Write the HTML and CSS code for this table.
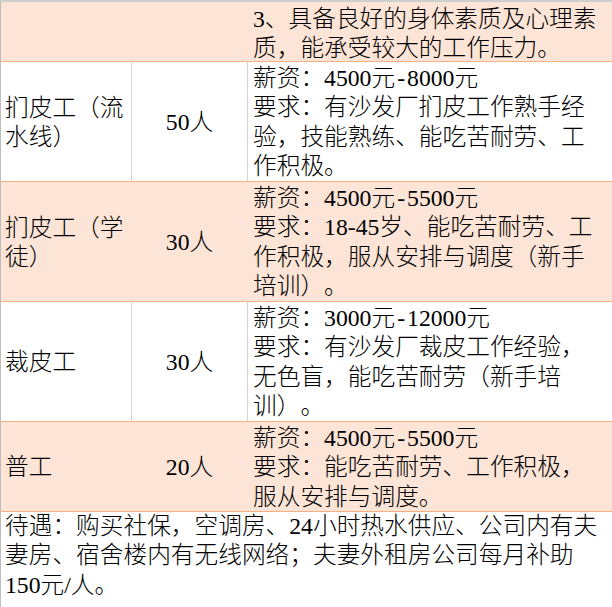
FILE: index.html
```html
<!DOCTYPE html>
<html lang="zh-CN">
<head>
<meta charset="utf-8">
<title>招聘岗位</title>
<link rel="stylesheet" href="styles.css">
</head>
<body>
<div class="sheet">
  <div class="row peach h60">
    <div class="cell c1"></div>
    <div class="cell c2"></div>
    <div class="cell c3 first"><p class="txt">3、具备良好的身体素质及心理素质，能承受较大的工作压力。</p></div>
  </div>
  <div class="row h120">
    <div class="cell c1"><p class="name">扪皮工（流水线）</p></div>
    <div class="cell c2"><p class="num">50人</p></div>
    <div class="cell c3"><p class="txt">薪资：4500元<span class="dash">-</span>8000元<br>要求：有沙发厂扪皮工作熟手经验，技能熟练、能吃苦耐劳、工作积极。</p></div>
  </div>
  <div class="row peach h120">
    <div class="cell c1"><p class="name">扪皮工（学徒）</p></div>
    <div class="cell c2"><p class="num">30人</p></div>
    <div class="cell c3"><p class="txt">薪资：4500元<span class="dash">-</span>5500元<br>要求：18-45岁、能吃苦耐劳、工作积极，服从安排与调度（新手培训）。</p></div>
  </div>
  <div class="row h120">
    <div class="cell c1"><p class="name">裁皮工</p></div>
    <div class="cell c2"><p class="num">30人</p></div>
    <div class="cell c3"><p class="txt">薪资：3000元<span class="dash">-</span>12000元<br>要求：有沙发厂裁皮工作经验，无色盲，能吃苦耐劳（新手培训）。</p></div>
  </div>
  <div class="row peach h90">
    <div class="cell c1"><p class="name">普工</p></div>
    <div class="cell c2"><p class="num">20人</p></div>
    <div class="cell c3"><p class="txt">薪资：4500元<span class="dash">-</span>5500元<br>要求：能吃苦耐劳、工作积极，服从安排与调度。</p></div>
  </div>
  <div class="footer">
    <p class="benefits">待遇：购买社保，空调房、24小时热水供应、公司内有夫妻房、宿舍楼内有无线网络；夫妻外租房公司每月补助150元/人。</p>
  </div>
</div>
</body>
</html>
```

FILE: styles.css
```css
* {
  box-sizing: border-box;
}

html, body {
  margin: 0;
  padding: 0;
  background: #ffffff;
}

body {
  width: 612px;
  height: 607px;
  overflow: hidden;
  font-family: "Liberation Serif", "Noto Sans CJK SC", serif;
  font-size: 23.7px;
  font-weight: 300;
  line-height: 29.3px;
  color: #000000;
  text-spacing-trim: space-all;
}

p {
  margin: 0;
}

.sheet {
  border-top: 2px solid #cfcfcf;
  border-left: 1px solid #bdbdbd;
  height: 607px;
}

.row {
  display: grid;
  grid-template-columns: 131px 116px 1fr;
  border-bottom: 1px solid #f4b084;
  overflow: hidden;
}

.h60 { height: 60px; }
.h120 { height: 120px; }
.h90 { height: 90px; }

.peach {
  background: #fce4d6;
}

.cell {
  border-right: 1px solid #d4d4d4;
  overflow: hidden;
}

.cell.c3 {
  border-right: none;
  padding: 2px 0 0 5px;
}

.cell.c3.first {
  padding-top: 3px;
}

.peach .cell {
  border-right-color: transparent;
}

.c1, .c2 {
  display: flex;
  align-items: center;
  padding-top: 3px;
}

.c1 {
  padding-left: 4px;
}

.c2 {
  justify-content: center;
}

.name {
  width: 122px;
}

.txt {
  width: 348px;
}

.dash {
  padding: 0 2px;
}

.footer {
  padding: 0 0 0 4px;
}

.benefits {
  width: 598px;
}
```
